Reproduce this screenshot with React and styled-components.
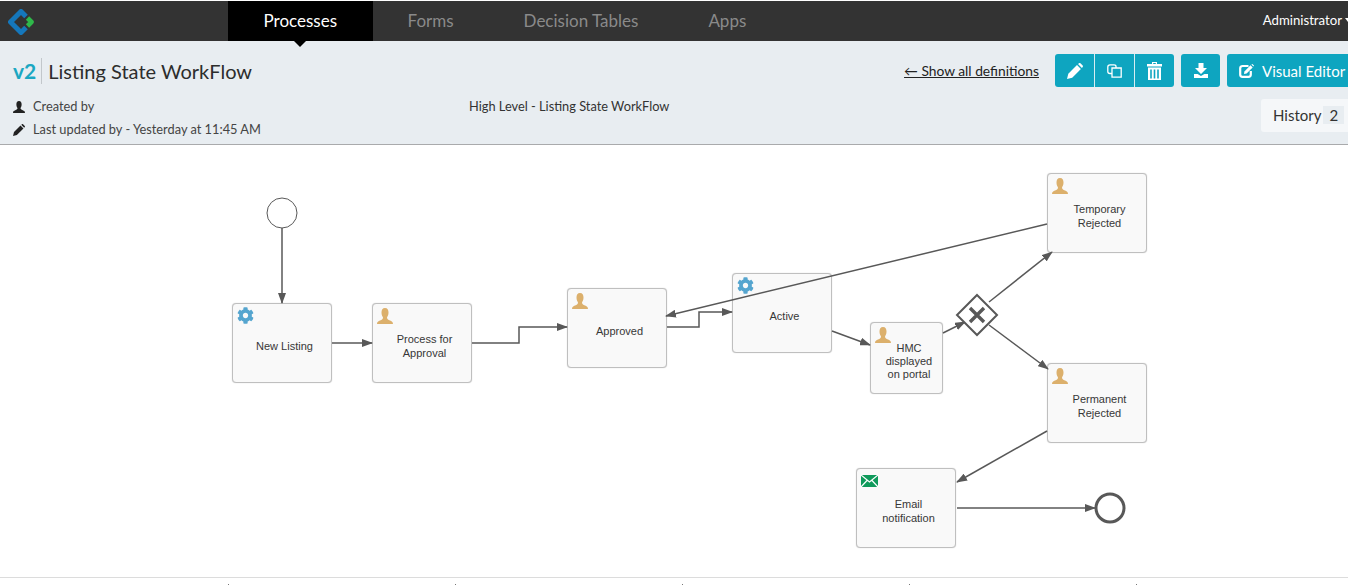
import React from "react";
import styled, { createGlobalStyle } from "styled-components";
import { FaCog } from "react-icons/fa";

const GlobalStyle = createGlobalStyle`
  html, body {
    margin: 0;
    padding: 0;
    height: 585px;
    overflow: hidden;
    background: #fff;
    font-family: Lato, "Open Sans", sans-serif;
  }
`;

const Page = styled.div`
  width: 1348px;
  height: 585px;
  overflow: hidden;
  padding-top: 1px;
  box-sizing: border-box;
`;

const NavBar = styled.div`
  height: 40px;
  background: #333333;
  display: flex;
  align-items: stretch;
  position: relative;
`;

const LogoWrap = styled.div`
  width: 228px;
  padding: 8px 0 0 8px;
  box-sizing: border-box;
`;

const Tab = styled.div`
  display: flex;
  align-items: center;
  padding: 0 ${(p) => (p.$active ? "35.5px" : "35px")} 2px;
  font-size: 17px;
  color: ${(p) => (p.$active ? "#fff" : "#8a8a8a")};
  background: ${(p) => (p.$active ? "#000" : "transparent")};
  position: relative;

  ${(p) =>
    p.$active &&
    `&:after {
      content: "";
      position: absolute;
      left: 50%;
      top: 100%;
      margin-left: -6px;
      border-left: 6px solid transparent;
      border-right: 6px solid transparent;
      border-top: 6px solid #000;
    }`}
`;

const UserMenu = styled.div`
  margin-left: auto;
  display: flex;
  align-items: center;
  gap: 3px;
  color: #fff;
  font-size: 13.2px;
  margin-right: -3px;
  padding-bottom: 2px;

  &:after {
    content: "";
    border-left: 3.5px solid transparent;
    border-right: 3.5px solid transparent;
    border-top: 4px solid #fff;
  }
`;

const SubHeader = styled.div`
  height: 104px;
  background: #e8edf1;
  border-bottom: 1px solid #a9aaac;
  box-sizing: border-box;
  padding: 13px 0 0 13px;
  display: grid;
  grid-template-columns: 456px 1fr auto;
  grid-template-rows: 33px 1fr;
  color: #333;
`;

const Title = styled.div`
  grid-column: 1 / 3;
  display: flex;
  align-items: center;
  font-size: 20px;
  color: #2d2d2d;
`;

const Version = styled.span`
  color: #1ba7c2;
  font-size: 21px;
  font-weight: 700;
  padding-right: 5px;
  margin-right: 6px;
  border-right: 1px solid #c2c7cb;
  line-height: 26px;
`;

const Actions = styled.div`
  display: flex;
  align-items: center;
  gap: 7px;
  margin-right: -9px;
`;

const BackLink = styled.a`
  color: #222;
  font-size: 13.8px;
  text-decoration: underline;
  margin-right: 9px;
`;

const ButtonGroup = styled.div`
  display: flex;
`;

const Button = styled.div`
  height: 33px;
  width: 39px;
  background: #0ea5c0;
  color: #fff;
  display: flex;
  align-items: center;
  justify-content: center;
  border-radius: 3px;
  box-sizing: border-box;
  flex-shrink: 0;

  ${ButtonGroup} & {
    width: 40px;
    border-radius: 0;
    border-right: 1px solid #d7edf2;
  }
  ${ButtonGroup} &:first-child {
    border-radius: 3px 0 0 3px;
  }
  ${ButtonGroup} &:last-child {
    width: 39px;
    border-right: 0;
    border-radius: 0 3px 3px 0;
  }
`;

const EditorButton = styled(Button)`
  width: 130px;
  justify-content: flex-start;
  padding-left: 12px;
  gap: 8px;
  font-size: 15px;
`;

const Meta = styled.div`
  padding-top: 8px;
  font-size: 12.8px;
  line-height: 23px;
  color: #444;
`;

const MetaRow = styled.div`
  display: flex;
  align-items: center;
  gap: 8px;
  svg {
    color: #222;
  }
`;

const Description = styled.div`
  padding-top: 8px;
  font-size: 12.8px;
  line-height: 23px;
  color: #333;
`;

const HistoryWrap = styled.div`
  display: flex;
  justify-content: flex-end;
  padding-top: 12px;
`;

const History = styled.div`
  width: 87px;
  height: 33px;
  background: #f5f7f9;
  border-radius: 3px 0 0 3px;
  display: flex;
  align-items: center;
  padding: 0 0 1px 12px;
  box-sizing: border-box;
  font-size: 15px;
  color: #333;
`;

const Count = styled.span`
  background: #e8edf1;
  margin-left: 2px;
  padding: 0 6px;
  line-height: 18px;
`;

const Canvas = styled.div`
  position: relative;
  height: 432px;
  border-bottom: 1px solid #dcdcdc;
`;

const Wires = styled.svg`
  position: absolute;
  left: 0;
  top: -145px;
  z-index: 1;
  pointer-events: none;
`;

const Task = styled.div`
  position: absolute;
  left: ${(p) => p.$x}px;
  top: ${(p) => p.$y}px;
  width: ${(p) => p.$w}px;
  height: ${(p) => p.$h}px;
  box-sizing: border-box;
  background: #f9f9f9;
  border: 1px solid #bfbfbf;
  border-radius: 4px;
  box-shadow: 0 0 1px rgba(0, 0, 0, 0.25);
  display: flex;
  align-items: center;
  justify-content: center;
  padding: 6px 0 0 5px;
  text-align: center;
  font-family: "Liberation Sans", Arial, sans-serif;
  font-size: 11px;
  line-height: ${(p) => p.$lh || 14}px;
  color: #373737;
`;

const TaskIcon = styled.div`
  position: absolute;
  left: ${(p) => p.$left}px;
  top: ${(p) => p.$top}px;
  width: 17px;
  display: flex;
  justify-content: center;
  color: ${(p) => p.$color};
`;

const Ticks = styled.div`
  display: flex;
  gap: 226px;
  padding: 6px 0 0 228px;
`;

const Tick = styled.div`
  width: 1px;
  height: 2px;
  background: #777;
`;

const Logo = () => (
  <svg width="26" height="26" viewBox="0 0 26 26" style={{ display: "block" }}>
    <path d="M18 7.5 L13 2.5 L2.5 13 L13 23.5 L18 18.5" fill="none" stroke="#1577bb" strokeWidth="5" strokeLinejoin="round" />
    <path d="M19.5 9 L23.5 13 L19.5 17" fill="none" stroke="#2fb84a" strokeWidth="4.6" strokeLinejoin="round" />
  </svg>
);

const UserGlyph = ({ size }) => (
  <svg width={size} height={size} viewBox="0 0 16 16" fill="currentColor">
    <path d="M8 0 C5.5 0 4.5 2 4.5 4.5 C4.5 7 5.4 8.3 6 9.4 C6 11 5 11.5 3 12.4 C1.5 13.1 0 13.5 0 16 L16 16 C16 13.5 14.5 13.1 13 12.4 C11 11.5 10 11 10 9.4 C10.6 8.3 11.5 7 11.5 4.5 C11.5 2 10.5 0 8 0 Z" />
  </svg>
);

const PencilGlyph = ({ size }) => (
  <svg width={size} height={size} viewBox="0 0 16 16" fill="currentColor">
    <path d="M0 16 L1.3 10.8 L10 2.1 L13.9 6 L5.2 14.7 Z" />
    <path d="M11 1.1 L12 0.2 C12.5 -0.1 13 0 13.4 0.3 L15.7 2.6 C16 3 16.1 3.5 15.7 4 L14.9 5 Z" />
  </svg>
);

const CloneGlyph = () => (
  <svg width="15" height="14" viewBox="0 0 15 14" fill="none" stroke="currentColor" strokeWidth="1.3">
    <path d="M9 4 L9 2.5 C9 1.5 8 0.8 7 0.8 L3 0.8 C1.8 0.8 0.8 1.8 0.8 3 L0.8 7.5 C0.8 8.7 1.8 9.5 3 9.5 L5 9.5" />
    <path d="M5 4 L14.2 4 L14.2 13.2 L5 13.2 Z" />
  </svg>
);

const TrashGlyph = () => (
  <svg width="15" height="18" viewBox="0 0 15 18" fill="currentColor">
    <path d="M5 0 L10 0 L10 2 L15 2 L15 4.4 L0 4.4 L0 2 L5 2 Z M6.2 1.1 L6.2 2 L8.8 2 L8.8 1.1 Z" fillRule="evenodd" />
    <path d="M1 5.6 L14 5.6 L14 18 L1 18 Z M3.2 7.4 L3.2 16.4 L4.8 16.4 L4.8 7.4 Z M6.7 7.4 L6.7 16.4 L8.3 16.4 L8.3 7.4 Z M10.2 7.4 L10.2 16.4 L11.8 16.4 L11.8 7.4 Z" fillRule="evenodd" />
  </svg>
);

const SaveGlyph = () => (
  <svg width="14" height="15" viewBox="0 0 14 15" fill="currentColor">
    <path d="M4.5 0 L9.5 0 L9.5 5 L13 5 L7 11 L1 5 L4.5 5 Z" />
    <path d="M0 11 L3.6 11 L7 13 L10.4 11 L14 11 L14 15 L0 15 Z" />
  </svg>
);

const EditGlyph = () => (
  <svg width="15" height="14" viewBox="0 0 15 14">
    <path d="M9.5 2 L3.5 2 C2.3 2 1.2 3 1.2 4.2 L1.2 10.5 C1.2 11.7 2.3 12.8 3.5 12.8 L9.5 12.8 C10.7 12.8 11.8 11.7 11.8 10.5 L11.8 7" fill="none" stroke="currentColor" strokeWidth="2.2" />
    <path d="M5 10 L5.4 7.4 L11.5 1.3 L13.7 3.5 L7.6 9.6 Z" fill="currentColor" />
    <path d="M12.4 0.5 L13.4 0 L15 1.6 L14.4 2.6 Z" fill="currentColor" />
  </svg>
);

const MailGlyph = () => (
  <svg width="17" height="12" viewBox="0 0 17 12" style={{ display: "block" }}>
    <rect width="17" height="12" fill="#0f9a5b" />
    <path d="M0 0 L8.5 7 L17 0 M0 12 L6 5.5 M17 12 L11 5.5" stroke="#fff" strokeWidth="1.2" fill="none" />
  </svg>
);

const tasks = [
  { x: 232, y: 158, w: 100, h: 80, kind: "service", text: ["New Listing"] },
  { x: 372, y: 158, w: 100, h: 80, kind: "user", text: ["Process for", "Approval"] },
  { x: 567, y: 143, w: 100, h: 80, kind: "user", text: ["Approved"] },
  { x: 732, y: 128, w: 100, h: 80, kind: "service", text: ["Active"] },
  { x: 870, y: 177, w: 73, h: 72, lh: 13, kind: "user", text: ["HMC", "displayed", "on portal"] },
  { x: 1047, y: 28, w: 100, h: 80, kind: "user", text: ["Temporary", "Rejected"] },
  { x: 1047, y: 218, w: 100, h: 80, kind: "user", text: ["Permanent", "Rejected"] },
  { x: 856, y: 323, w: 100, h: 80, kind: "mail", text: ["Email", "notification"] },
];

const wires = [
  "M282 228 L282 303",
  "M332 343 L372 343",
  "M472 343 L519 343 L519 327 L567 327",
  "M667 327 L699 327 L699 312 L732 312",
  "M832 331 L870 345",
  "M943 333 L965 322",
  "M989 302 L1052 252",
  "M989 325 L1048 369",
  "M1047 431 L957 482",
  "M957 508 L1095 508",
  "M1047 224 L666 316",
];

function Icon({ kind }) {
  if (kind === "service") {
    return (
      <TaskIcon $color="#55a5cf" $top={3} $left={4}>
        <FaCog size={17} />
      </TaskIcon>
    );
  }
  if (kind === "user") {
    return (
      <TaskIcon $color="#dcb06c" $top={4} $left={3}>
        <UserGlyph size={16} />
      </TaskIcon>
    );
  }
  return (
    <TaskIcon $top={6} $left={4}>
      <MailGlyph />
    </TaskIcon>
  );
}

export default function App() {
  return (
    <Page>
      <GlobalStyle />
      <NavBar>
        <LogoWrap>
          <Logo />
        </LogoWrap>
        <Tab $active>Processes</Tab>
        <Tab>Forms</Tab>
        <Tab>Decision Tables</Tab>
        <Tab>Apps</Tab>
        <UserMenu>Administrator</UserMenu>
      </NavBar>
      <SubHeader>
        <Title>
          <Version>v2</Version>
          Listing State WorkFlow
        </Title>
        <Actions>
          <BackLink>← Show all definitions</BackLink>
          <ButtonGroup>
            <Button>
              <PencilGlyph size={16} />
            </Button>
            <Button>
              <CloneGlyph />
            </Button>
            <Button>
              <TrashGlyph />
            </Button>
          </ButtonGroup>
          <Button>
            <SaveGlyph />
          </Button>
          <EditorButton>
            <EditGlyph />
            Visual Editor
          </EditorButton>
        </Actions>
        <Meta>
          <MetaRow>
            <UserGlyph size={12} />
            Created by
          </MetaRow>
          <MetaRow>
            <PencilGlyph size={12} />
            Last updated by - Yesterday at 11:45 AM
          </MetaRow>
        </Meta>
        <Description>High Level - Listing State WorkFlow</Description>
        <HistoryWrap>
          <History>
            History <Count>2</Count>
          </History>
        </HistoryWrap>
      </SubHeader>
      <Canvas>
        <Wires width="1348" height="577" viewBox="0 0 1348 577">
          <defs>
            <marker id="arrow" markerWidth="11" markerHeight="8" refX="10" refY="4" orient="auto" markerUnits="userSpaceOnUse">
              <path d="M0 0 L11 4 L0 8 Z" fill="#585858" />
            </marker>
          </defs>
          {wires.map((d) => (
            <path key={d} d={d} fill="none" stroke="#585858" strokeWidth="1.5" markerEnd="url(#arrow)" />
          ))}
          <circle cx="282" cy="213" r="15" fill="#fff" stroke="#585858" strokeWidth="1" />
          <circle cx="1110" cy="508" r="14" fill="#fff" stroke="#585858" strokeWidth="3" />
          <path d="M977 295 L997 315 L977 335 L957 315 Z" fill="#fff" stroke="#585858" strokeWidth="2" />
          <path d="M970 308 L984 322 M984 308 L970 322" stroke="#585858" strokeWidth="3.4" />
        </Wires>
        {tasks.map((t) => (
          <Task key={t.text[0]} $x={t.x} $y={t.y} $w={t.w} $h={t.h} $lh={t.lh}>
            <Icon kind={t.kind} />
            <div>
              {t.text.map((line) => (
                <div key={line}>{line}</div>
              ))}
            </div>
          </Task>
        ))}
      </Canvas>
      <Ticks>
        {[0, 1, 2, 3, 4].map((i) => (
          <Tick key={i} />
        ))}
      </Ticks>
    </Page>
  );
}
